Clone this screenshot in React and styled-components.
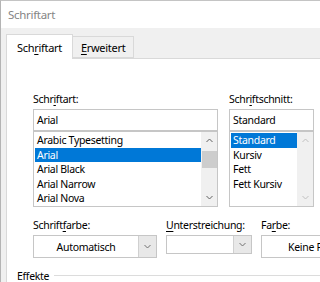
import React from 'react';
import styled, { createGlobalStyle } from 'styled-components';

// Page defaults
const GlobalStyle = createGlobalStyle`
    html, body {
        margin: 0;
        padding: 0;
        background: #ffffff;
    }
    body {
        font-family: "Noto Sans", "Open Sans", sans-serif;
        font-size: 10.5px;
        letter-spacing: -0.3px;
        color: #000000;
    }
`;

const Dialog = styled.div`
    width: 320px;
    height: 282px;
    overflow: hidden;
    box-sizing: border-box;
    border-top: 1px solid #c4c4c4;
    border-left: 1px solid #b4b4b4;
    background: #f0f0f0;
    display: flex;
    flex-direction: column;
`;

const TitleBar = styled.div`
    height: 27px;
    flex: none;
    background: #ffffff;
    color: #858585;
    font-size: 11.5px;
    display: flex;
    align-items: center;
    padding-left: 7px;
`;

const TabStrip = styled.div`
    height: 30px;
    flex: none;
    display: flex;
    align-items: flex-end;
    padding-left: 5px;
    position: relative;
    z-index: 1;
`;

const Tab = styled.div`
    box-sizing: border-box;
    height: ${p => (p.$active ? '25px' : '22px')};
    margin-bottom: ${p => (p.$active ? '-1px' : '0')};
    padding: 0 ${p => (p.$active ? '10px' : '8px')};
    display: flex;
    align-items: center;
    background: ${p => (p.$active ? '#ffffff' : '#f0f0f0')};
    border: 1px solid #d9d9d9;
    border-bottom: ${p => (p.$active ? 'none' : '1px solid #d9d9d9')};
    border-left: ${p => (p.$first ? '1px solid #d9d9d9' : 'none')};
    font-size: 11px;
`;

const Key = styled.span`
    text-decoration: underline;
    text-underline-offset: 2px;
`;

const TabPage = styled.div`
    flex: 1;
    margin-left: 5px;
    background: #ffffff;
    border-top: 1px solid #d9d9d9;
    border-left: 1px solid #d9d9d9;
    padding: 33px 0 0 26px;
    display: flex;
    flex-direction: column;
`;

const TopRow = styled.div`
    display: flex;
    gap: 11px;
`;

const Column = styled.div`
    width: ${p => p.$width}px;
    flex: none;
    display: flex;
    flex-direction: column;
`;

const Label = styled.div`
    height: 15px;
    line-height: 15px;
    margin-bottom: 2px;
    white-space: nowrap;
`;

const TextBox = styled.div`
    box-sizing: border-box;
    height: 22px;
    border: 1px solid #c6c6c6;
    padding-left: 3px;
    display: flex;
    align-items: center;
`;

const ListBox = styled.div`
    box-sizing: border-box;
    height: 76px;
    border: 1px solid #c6c6c6;
    display: flex;
    overflow: hidden;
`;

const Rows = styled.div`
    flex: 1;
    padding: 1px 0 0 1px;
    overflow: hidden;
`;

const Row = styled.div`
    height: 14.5px;
    line-height: 14.5px;
    padding-left: 2px;
    white-space: nowrap;
    background: ${p => (p.$selected ? '#0078d7' : 'transparent')};
    color: ${p => (p.$selected ? '#ffffff' : '#000000')};
`;

const ScrollBar = styled.div`
    width: 16px;
    flex: none;
    background: #f0f0f0;
    display: flex;
    flex-direction: column;
    align-items: center;
`;

const ScrollArrow = styled.div`
    height: 17px;
    width: 100%;
    display: flex;
    align-items: center;
    justify-content: center;
    flex: none;
`;

const ScrollTrack = styled.div`
    flex: 1;
    width: 100%;
    display: flex;
    flex-direction: column;
    align-items: center;
`;

const Thumb = styled.div`
    width: 15px;
    height: 17px;
    background: #cdcdcd;
    margin-top: 2px;
`;

const BottomRow = styled.div`
    display: flex;
    gap: 9px;
    margin-top: 11px;
`;

const Combo = styled.div`
    box-sizing: border-box;
    height: ${p => p.$height}px;
    border: 1px solid #c6c6c6;
    display: flex;
    align-items: stretch;
    white-space: nowrap;
`;

const ComboText = styled.div`
    flex: 1;
    display: flex;
    align-items: center;
    justify-content: ${p => (p.$start ? 'flex-start' : 'center')};
    padding-left: ${p => (p.$start ? '26px' : '0')};
    overflow: hidden;
`;

const DropButton = styled.div`
    width: 17px;
    flex: none;
    background: #e8e8e8;
    border-left: 1px solid #d0d0d0;
    display: flex;
    align-items: center;
    justify-content: center;
`;

const Legend = styled.div`
    display: flex;
    align-items: center;
    gap: 5px;
    margin: 10px 0 0 -16px;
    height: 15px;
    white-space: nowrap;

    &::after {
        content: '';
        flex: 1;
        height: 1px;
        background: #dcdcdc;
    }
`;

const Chevron = ({ up, color }) => (
    <svg width="7" height="5" viewBox="0 0 7 5">
        <path
            d={up ? 'M0.5 4 L3.5 1 L6.5 4' : 'M0.5 1 L3.5 4 L6.5 1'}
            fill="none"
            stroke={color}
            strokeWidth="1"
        />
    </svg>
);

const fonts = ['Arabic Typesetting', 'Arial', 'Arial Black', 'Arial Narrow', 'Arial Nova'];
const styles = ['Standard', 'Kursiv', 'Fett', 'Fett Kursiv'];

export default function App() {
    return (
        <>
            <GlobalStyle />
            <Dialog>
                <TitleBar>Schriftart</TitleBar>
                <TabStrip>
                    <Tab $active $first>Sch<Key>r</Key>iftart</Tab>
                    <Tab><Key>E</Key>rweitert</Tab>
                </TabStrip>
                <TabPage>
                    <TopRow>
                        <Column $width={185}>
                            <Label>Schr<Key>i</Key>ftart:</Label>
                            <TextBox>Arial</TextBox>
                            <ListBox>
                                <Rows>
                                    {fonts.map(f => (
                                        <Row key={f} $selected={f === 'Arial'}>{f}</Row>
                                    ))}
                                </Rows>
                                <ScrollBar>
                                    <ScrollArrow><Chevron up color="#606060" /></ScrollArrow>
                                    <ScrollTrack><Thumb /></ScrollTrack>
                                    <ScrollArrow><Chevron color="#606060" /></ScrollArrow>
                                </ScrollBar>
                            </ListBox>
                        </Column>
                        <Column $width={85}>
                            <Label>Schr<Key>i</Key>ftschnitt:</Label>
                            <TextBox>Standard</TextBox>
                            <ListBox>
                                <Rows>
                                    {styles.map(s => (
                                        <Row key={s} $selected={s === 'Standard'}>{s}</Row>
                                    ))}
                                </Rows>
                                <ScrollBar>
                                    <ScrollArrow><Chevron up color="#c0c0c0" /></ScrollArrow>
                                    <ScrollTrack />
                                    <ScrollArrow><Chevron color="#c0c0c0" /></ScrollArrow>
                                </ScrollBar>
                            </ListBox>
                        </Column>
                    </TopRow>
                    <BottomRow>
                        <Column $width={124}>
                            <Label>Schrift<Key>f</Key>arbe:</Label>
                            <Combo $height={23}>
                                <ComboText>Automatisch</ComboText>
                                <DropButton><Chevron color="#707070" /></DropButton>
                            </Combo>
                        </Column>
                        <Column $width={86}>
                            <Label><Key>U</Key>nterstreichung:</Label>
                            <Combo $height={19}>
                                <ComboText />
                                <DropButton><Chevron color="#707070" /></DropButton>
                            </Combo>
                        </Column>
                        <Column $width={90}>
                            <Label>Fa<Key>r</Key>be:</Label>
                            <Combo $height={23}>
                                <ComboText $start>Keine Farbe</ComboText>
                            </Combo>
                        </Column>
                    </BottomRow>
                    <Legend>Effekte</Legend>
                </TabPage>
            </Dialog>
        </>
    );
}
